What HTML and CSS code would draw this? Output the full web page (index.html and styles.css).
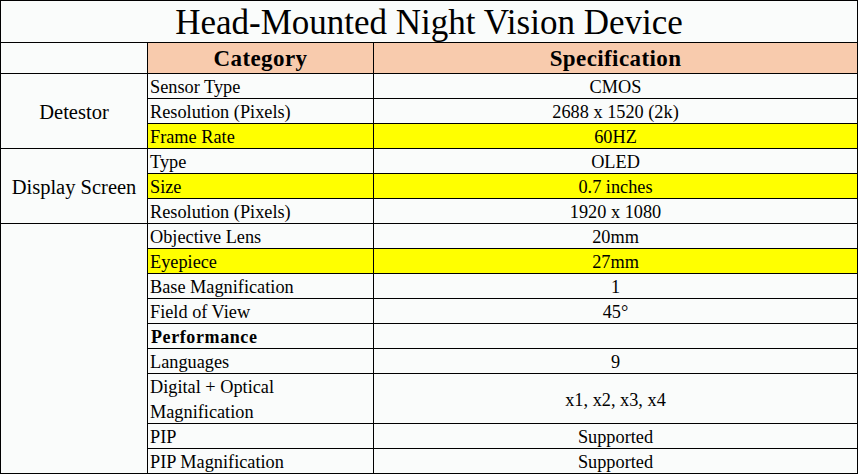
FILE: index.html
```html
<!DOCTYPE html>
<html>
<head>
<meta charset="utf-8">
<link rel="stylesheet" href="styles.css">
</head>
<body>
<div class="sheet">
  <div class="cell title">Head-Mounted Night Vision Device</div>
  <div class="cell"></div>
  <div class="cell head">Category</div>
  <div class="cell head">Specification</div>

  <div class="cell group g3">Detestor</div>
  <div class="cell label">Sensor Type</div>
  <div class="cell value">CMOS</div>
  <div class="cell label">Resolution (Pixels)</div>
  <div class="cell value">2688 x 1520 (2k)</div>
  <div class="cell label hl">Frame Rate</div>
  <div class="cell value hl">60HZ</div>

  <div class="cell group g3">Display Screen</div>
  <div class="cell label">Type</div>
  <div class="cell value">OLED</div>
  <div class="cell label hl">Size</div>
  <div class="cell value hl">0.7 inches</div>
  <div class="cell label">Resolution (Pixels)</div>
  <div class="cell value">1920 x 1080</div>

  <div class="cell group g9"></div>
  <div class="cell label">Objective Lens</div>
  <div class="cell value">20mm</div>
  <div class="cell label hl">Eyepiece</div>
  <div class="cell value hl">27mm</div>
  <div class="cell label">Base Magnification</div>
  <div class="cell value">1</div>
  <div class="cell label">Field of View</div>
  <div class="cell value">45°</div>
  <div class="cell label bold">Performance</div>
  <div class="cell value"></div>
  <div class="cell label">Languages</div>
  <div class="cell value">9</div>
  <div class="cell label tall">Digital + Optical<br>Magnification</div>
  <div class="cell value">x1, x2, x3, x4</div>
  <div class="cell label">PIP</div>
  <div class="cell value">Supported</div>
  <div class="cell label">PIP Magnification</div>
  <div class="cell value">Supported</div>
</div>
</body>
</html>
```

FILE: styles.css
```css
html, body {
  margin: 0;
  padding: 0;
  background: #fafcfb;
}
.sheet {
  width: 858px;
  height: 474px;
  box-sizing: border-box;
  display: grid;
  grid-template-columns: 146px 225px 483px;
  grid-template-rows: 41px 30px repeat(12, 24px) 49px 24px 24px;
  gap: 1px;
  padding: 1px;
  background: #000;
  font-family: "Liberation Serif", "Times New Roman", serif;
  color: #000;
}
.cell {
  background: #fafcfb;
  display: flex;
  align-items: center;
  justify-content: center;
  font-size: 18.3px;
  line-height: 24px;
  padding-top: 2px;
  box-sizing: border-box;
  white-space: nowrap;
  overflow: hidden;
}
.title {
  grid-column: 1 / 4;
  font-size: 35px;
  line-height: 41px;
  padding-top: 1px;
}
.head {
  background: #f8cbad;
  font-weight: bold;
  font-size: 23px;
  letter-spacing: 0.4px;
  padding-top: 1px;
}
.group {
  font-size: 20.5px;
  padding-top: 1px;
}
.g3 { grid-row: span 3; }
.g9 { grid-row: span 9; }
.label {
  justify-content: flex-start;
  padding-left: 2px;
}
.hl { background: #ffff00; }
.bold {
  font-weight: bold;
  font-size: 18px;
  letter-spacing: 0.6px;
  padding-left: 3px;
}
.tall { line-height: 25px; }
```
